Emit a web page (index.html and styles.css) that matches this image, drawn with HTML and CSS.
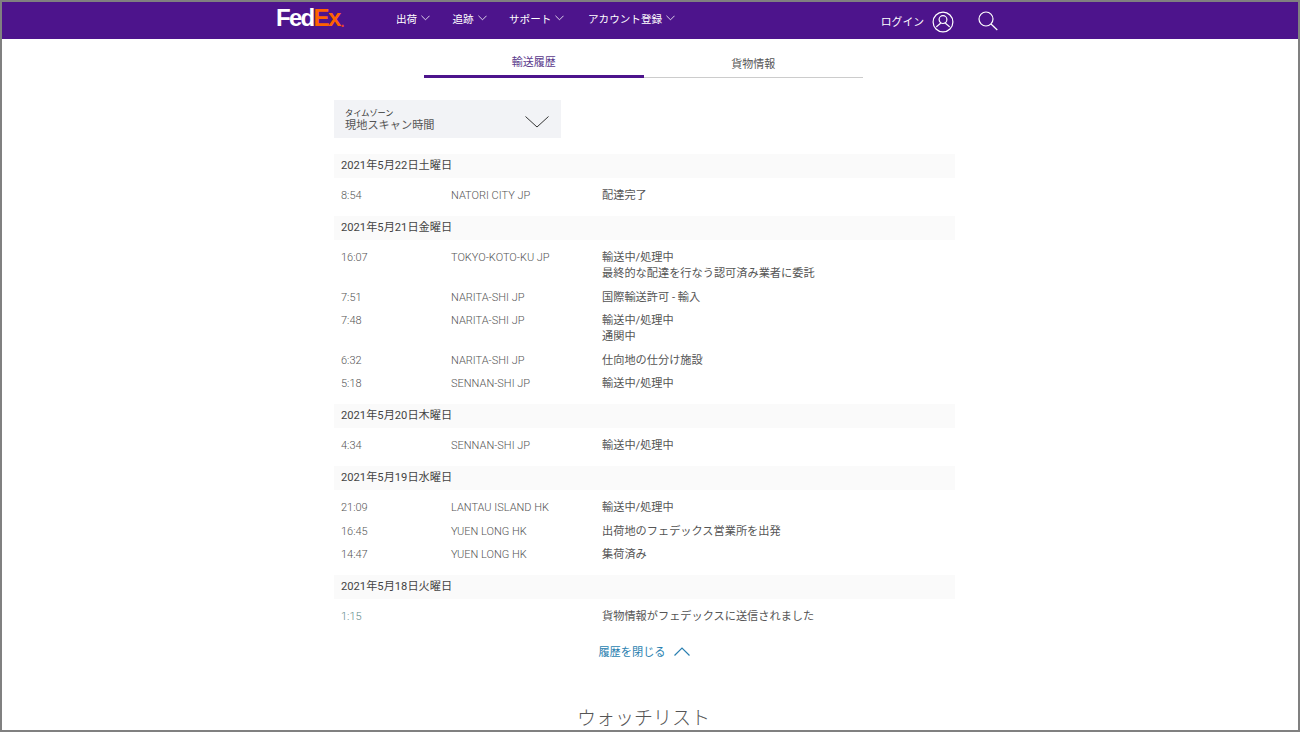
FILE: index.html
```html
<!DOCTYPE html>
<html lang="ja">
	<head>
		<title>輸送履歴</title>
		<link rel="stylesheet" href="styles.css">
	</head>
	<body>
		<div class="frame">
			<header class="topbar">
				<a class="logo"><span class="fed">Fed</span><span class="ex">Ex</span><span class="dot">.</span></a>
				<nav class="menu">
					<a class="ship">出荷<svg class="caret" viewBox="0 0 10 6"><polyline points="0.5,0.5 5,5 9.5,0.5" /></svg></a>
					<a class="track">追跡<svg class="caret" viewBox="0 0 10 6"><polyline points="0.5,0.5 5,5 9.5,0.5" /></svg></a>
					<a class="support">サポート<svg class="caret" viewBox="0 0 10 6"><polyline points="0.5,0.5 5,5 9.5,0.5" /></svg></a>
					<a>アカウント登録<svg class="caret" viewBox="0 0 10 6"><polyline points="0.5,0.5 5,5 9.5,0.5" /></svg></a>
				</nav>
				<div class="account">
					<a class="login">ログイン</a>
					<svg class="user" viewBox="0 0 22 22">
						<circle cx="11" cy="11" r="9.9" />
						<circle cx="11" cy="8.6" r="3.9" />
						<path d="M8.6 11.8c0 1.6-3.6 2.2-4.2 4.4M13.4 11.8c0 1.6 3.6 2.2 4.2 4.4" />
					</svg>
					<svg class="search" viewBox="0 0 20 20">
						<circle cx="8" cy="8" r="7" />
						<line x1="13" y1="13" x2="19.3" y2="19" />
					</svg>
				</div>
			</header>
			<main class="content">
				<div class="tabs">
					<a class="tab active">輸送履歴</a>
					<a class="tab">貨物情報</a>
				</div>
				<div class="zone">
					<div class="zone-text">
						<div class="zone-label">タイムゾーン</div>
						<div class="zone-value">現地スキャン時間</div>
					</div>
					<svg class="zone-caret" viewBox="0 0 24 12"><polyline points="0.5,0.5 12,11 23.5,0.5" /></svg>
				</div>
				<section class="day">
					<h3>2021年5月22日土曜日</h3>
					<div class="rows">
						<div class="row"><span>8:54</span><span>NATORI CITY JP</span><span>配達完了</span></div>
					</div>
				</section>
				<section class="day">
					<h3>2021年5月21日金曜日</h3>
					<div class="rows">
						<div class="row"><span>16:07</span><span>TOKYO-KOTO-KU JP</span><span>輸送中/処理中<br>最終的な配達を行なう認可済み業者に委託</span></div>
						<div class="row"><span>7:51</span><span>NARITA-SHI JP</span><span>国際輸送許可 - 輸入</span></div>
						<div class="row"><span>7:48</span><span>NARITA-SHI JP</span><span>輸送中/処理中<br>通関中</span></div>
						<div class="row"><span>6:32</span><span>NARITA-SHI JP</span><span>仕向地の仕分け施設</span></div>
						<div class="row"><span>5:18</span><span>SENNAN-SHI JP</span><span>輸送中/処理中</span></div>
					</div>
				</section>
				<section class="day">
					<h3>2021年5月20日木曜日</h3>
					<div class="rows">
						<div class="row"><span>4:34</span><span>SENNAN-SHI JP</span><span>輸送中/処理中</span></div>
					</div>
				</section>
				<section class="day">
					<h3>2021年5月19日水曜日</h3>
					<div class="rows">
						<div class="row"><span>21:09</span><span>LANTAU ISLAND HK</span><span>輸送中/処理中</span></div>
						<div class="row"><span>16:45</span><span>YUEN LONG HK</span><span>出荷地のフェデックス営業所を出発</span></div>
						<div class="row"><span>14:47</span><span>YUEN LONG HK</span><span>集荷済み</span></div>
					</div>
				</section>
				<section class="day">
					<h3>2021年5月18日火曜日</h3>
					<div class="rows">
						<div class="row"><span class="first">1:15</span><span></span><span>貨物情報がフェデックスに送信されました</span></div>
					</div>
				</section>
				<a class="close">履歴を閉じる<svg viewBox="0 0 16 9"><polyline points="0.5,8.5 8,1 15.5,8.5" /></svg></a>
				<h2 class="watch">ウォッチリスト</h2>
			</main>
		</div>
	</body>
</html>
```

FILE: styles.css
```css
* {
	box-sizing: border-box;
}

body {
	margin: 0;
	font-family: Roboto, "Noto Sans CJK JP", sans-serif;
	font-size: 11.2px;
	color: #555;
}

.frame {
	height: 732px;
	border: 2px solid #808080;
	overflow: hidden;
	background-color: #fff;
}

.topbar {
	display: flex;
	align-items: center;
	height: 37px;
	padding: 0 300px 0 275px;
	background-color: #4d148c;
	color: #fff;
}

.logo {
	display: flex;
	width: 119px;
	font-family: "Liberation Sans", sans-serif;
	font-size: 24px;
	font-weight: bold;
	letter-spacing: -1.7px;
	line-height: 30px;
	margin-top: -2px;
	margin-left: -1px;
	margin-right: 1px;
}

.logo .ex {
	color: #ff6200;
}

.logo .dot {
	color: #e8432a;
	font-size: 14px;
	letter-spacing: 0;
	margin-top: 4px;
	margin-left: 1px;
}

.menu {
	display: flex;
	font-size: 10.6px;
	margin-top: -5px;
}

.menu a {
	display: flex;
	align-items: center;
}

.menu .ship, .menu .track {
	width: 56.5px;
}

.menu .support {
	width: 79px;
}

.caret {
	width: 9px;
	height: 6px;
	margin-left: 4px;
	fill: none;
	stroke: #fff;
	stroke-width: 0.9;
}

.account {
	display: flex;
	align-items: center;
	margin-left: auto;
}

.login {
	font-size: 10.8px;
	margin: 0 8px 0 0;
}

.user {
	width: 22px;
	height: 22px;
	margin: 2px 24px 0 0;
	fill: none;
	stroke: #fff;
	stroke-width: 1.2;
}

.search {
	width: 20px;
	height: 20px;
	fill: none;
	stroke: #fff;
	stroke-width: 1.2;
}

.content {
	width: 621px;
	margin-left: 332px;
}

.tabs {
	display: flex;
	width: 439px;
	margin: 0 0 22px 90px;
}

.tab {
	flex: 1;
	height: 39px;
	padding-top: 17px;
	font-size: 11px;
	line-height: 18px;
	text-align: center;
	border-bottom: 1px solid #ccc;
}

.tab.active {
	color: #5b3a8c;
	border-bottom: 3px solid #4d148c;
	padding-top: 15px;
}

.zone {
	display: flex;
	align-items: center;
	justify-content: space-between;
	width: 227px;
	height: 38px;
	padding: 2px 12px 0 11px;
	margin-bottom: 16px;
	background-color: #f2f3f6;
}

.zone-label {
	font-size: 8.2px;
	line-height: 10px;
	color: #333;
}

.zone-value {
	line-height: 15px;
	color: #555;
}

.zone-caret {
	width: 24px;
	height: 12px;
	margin-top: 3px;
	fill: none;
	stroke: #333;
	stroke-width: 1;
}

.day h3 {
	height: 24px;
	margin: 0;
	padding-left: 7px;
	font-size: 11.2px;
	font-weight: normal;
	line-height: 23px;
	color: #444;
	background-color: #fafafa;
}

.rows {
	display: flex;
	flex-direction: column;
	gap: 7.5px;
	padding: 10px 0 12px;
}

.row {
	display: grid;
	grid-template-columns: 110px 151px 1fr;
	padding-left: 7px;
	font-size: 11px;
	line-height: 16px;
	font-weight: 300;
}

.row span:nth-child(3) {
	font-size: 11.2px;
	font-weight: 400;
}

.row .first {
	color: #5f8a8a;
}

.close {
	display: flex;
	justify-content: center;
	align-items: center;
	gap: 8px;
	height: 20px;
	margin-top: 4px;
	padding-right: 1px;
	color: #2a7fb0;
}

.close svg {
	width: 16px;
	height: 9px;
	fill: none;
	stroke: #2a7fb0;
	stroke-width: 1.2;
}

.watch {
	margin: 46px 0 0;
	padding-right: 2px;
	font-size: 19px;
	font-weight: 300;
	line-height: 24px;
	text-align: center;
	color: #555;
}
```
